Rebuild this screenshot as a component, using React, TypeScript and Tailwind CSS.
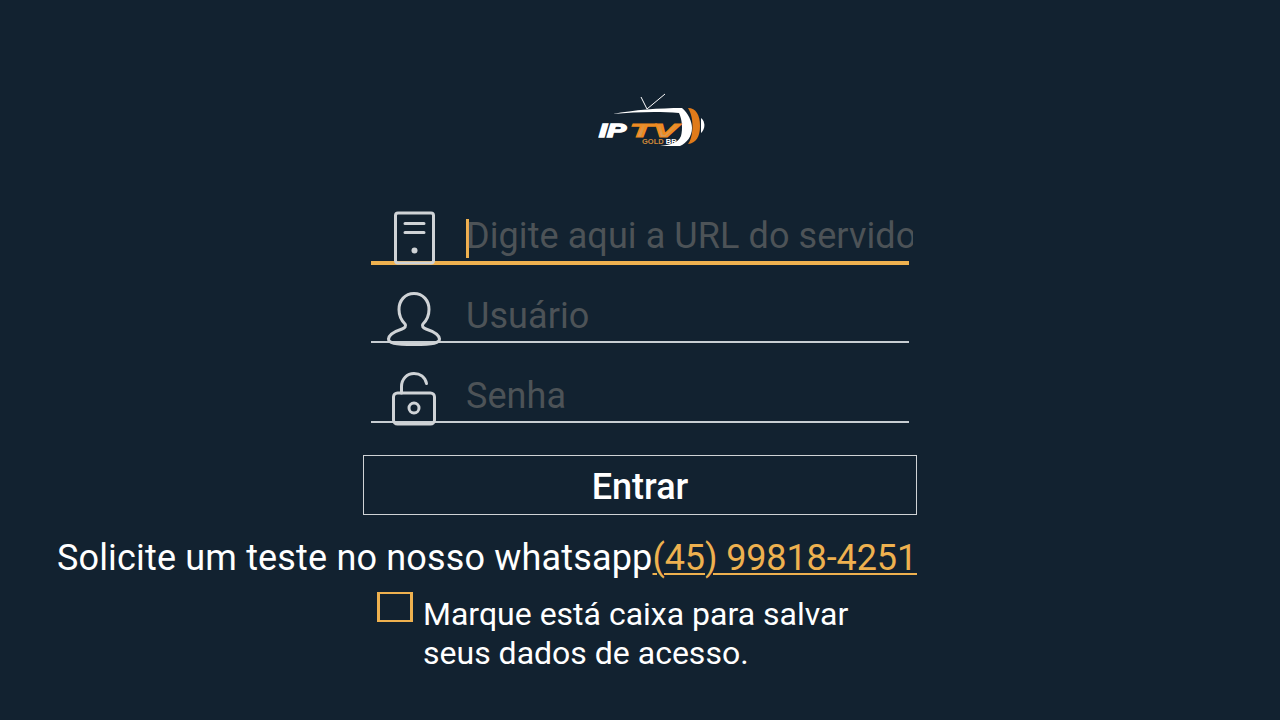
const font = { fontFamily: "Roboto, 'Liberation Sans', sans-serif" };

const ServerIcon = () => (
  <svg width="44" height="56" viewBox="0 0 44 56" fill="none" stroke="#cfd3d6" strokeWidth="3" strokeLinecap="round">
    <rect x="3.5" y="2" width="38" height="50" rx="2.5" />
    <path d="M13 12.5h19M13 21.5h19" />
    <circle cx="22.5" cy="39.5" r="3" fill="#cfd3d6" stroke="none" />
  </svg>
);

const UserIcon = () => (
  <svg width="56" height="56" viewBox="0 0 56 56" fill="none" stroke="#cfd3d6" strokeWidth="3" strokeLinejoin="round">
    <path d="M28 2.500C19 2.500 13 9.500 13 18.500C13 25 16 30 19 33C20.500 35 19 37 16 38C10 40 3 43 2.500 48C2.500 52 8 53.500 28 53.500C48 53.500 53.500 52 53.500 48C53 43 46 40 40 38C37 37 35.500 35 37 33C40 30 43 25 43 18.500C43 9.500 37 2.500 28 2.500Z" />
  </svg>
);

const LockIcon = () => (
  <svg width="46" height="56" viewBox="0 0 46 56" fill="none" stroke="#cfd3d6" strokeWidth="3" strokeLinecap="round">
    <rect x="2.500" y="22" width="41" height="31" rx="4" />
    <path d="M10.500 22v-6.500C10.500 8 16 2.500 23 2.500c6 0 11 3.500 12.500 10" />
    <circle cx="23" cy="37" r="5" />
  </svg>
);

const Logo = () => (
  <svg width="108" height="56" viewBox="0 0 108 56" fill="none">
    <defs>
      <linearGradient id="tv" x1="0" y1="0" x2="0" y2="1">
        <stop offset="0" stopColor="#f08a1d" />
        <stop offset="1" stopColor="#c9a070" />
      </linearGradient>
    </defs>
    <path d="M49 16L43 4M49 16L67 1" stroke="#fff" strokeWidth="1" />
    <path d="M15 21C35 17 62 15 84 15C90 20 94 28 94 35C94 43 89 50 82 53L62 53C72 52 80 50 83 43C85 36 84 26 81 20C60 18 36 19 15 21Z" fill="#fff" />
    <path d="M90 15C98 15 102 22 102 33C102 44 98 50 90 51C95 45 97 26 90 15Z" fill="#e07b1a" />
    <path d="M103 25C106 27 107 32 106 35C105 38 104 39 103 40Z" fill="#fff" />
    <text x="1" y="44" fill="#fff" stroke="#fff" strokeWidth="1.400" fontSize="19" fontWeight="900" fontStyle="italic" fontFamily="'Liberation Sans', sans-serif" textLength="27" lengthAdjust="spacingAndGlyphs">IP</text>
    <text x="32" y="44" fill="url(#tv)" stroke="#f08a1d" strokeWidth="1.200" fontSize="19" fontWeight="900" fontStyle="italic" fontFamily="'Liberation Sans', sans-serif" textLength="48" lengthAdjust="spacingAndGlyphs">TV</text>
    <text x="44" y="51" fill="#d08a3a" fontSize="7.500" fontWeight="700" fontFamily="'Liberation Sans', sans-serif">GOLD <tspan fill="#fff">BR</tspan></text>
  </svg>
);

const Field = ({ icon, label, active }: { icon: React.ReactNode; label: string; active?: boolean }) => (
  <div className={`flex w-[538px] items-end ${active ? "-mb-[2px] h-[62px] border-b-[4px] border-[#eeb14f]" : "h-[60px] border-b-2 border-[#c8ced2]"}`}>
    <div className="-mb-[6px] flex w-[95px] shrink-0 justify-center pr-[10px]">{icon}</div>
    <div className="-mr-[4px] flex h-[58px] w-[447px] shrink-0 items-center self-start overflow-hidden whitespace-nowrap pt-[7px] text-[36px] tracking-[0.08px] text-[#4d5357]">
      {active && <span className="mt-[6px] h-[39px] w-[3px] shrink-0 bg-[#eeb14f]" />}
      <span className={active ? "-ml-[3px]" : ""}>{label}</span>
    </div>
  </div>
);

export default function App() {
  return (
    <div className="flex h-[720px] w-[1280px] flex-col items-center overflow-hidden bg-[#122230] text-white" style={font}>
      <div className="ml-[24px] mt-[94px] flex h-[54px] items-center">
        <Logo />
      </div>
      <div className="mt-[55px] flex flex-col gap-[20px]">
        <Field icon={<ServerIcon />} label="Digite aqui a URL do servidor" active />
        <Field icon={<UserIcon />} label="Usuário" />
        <Field icon={<LockIcon />} label="Senha" />
      </div>
      <button className="mt-[32px] h-[60px] w-[554px] border border-[#cfd3d6] pt-[4px] text-[36px] font-medium">Entrar</button>
      <div className="mt-[18px] flex h-[50px] w-[554px] items-center justify-end whitespace-nowrap text-[36px] leading-[50px]">
        <span className="tracking-[0.17px]">Solicite um teste no nosso whatsapp</span>
        <span className="tracking-[-0.12px] text-[#eeb14f] underline decoration-2 underline-offset-[3px]">(45) 99818-4251</span>
      </div>
      <div className="mt-[8px] flex w-[554px] items-start pl-[14px]">
        <div className="mt-[1px] h-[30px] w-[36px] shrink-0 border-x-[3px] border-y-2 border-[#eeb14f]" />
        <p className="ml-[10px] mt-[4px] text-[32px] leading-[39px]">
          Marque está caixa para salvar
          <br />
          seus dados de acesso.
        </p>
      </div>
    </div>
  );
}
